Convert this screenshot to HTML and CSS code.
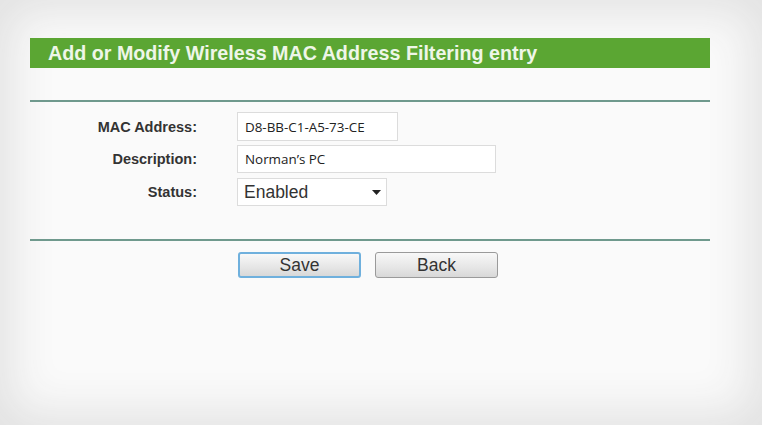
FILE: index.html
```html
<!DOCTYPE html>
<html>
<head>
<meta charset="utf-8">
<link rel="stylesheet" href="styles.css">
</head>
<body>
<div class="page">
  <div class="title">Add or Modify Wireless MAC Address Filtering entry</div>
  <div class="rule rule-top"></div>
  <div class="form">
    <div class="label">MAC Address:</div>
    <div class="field field-mac">D8-BB-C1-A5-73-CE</div>
    <div class="label">Description:</div>
    <div class="field field-desc">Norman’s PC</div>
    <div class="label">Status:</div>
    <div class="field field-select"><span>Enabled</span><svg class="caret" width="9" height="5" viewBox="0 0 9 5"><path d="M0 0 L9 0 L4.5 5 Z" fill="#222"/></svg></div>
  </div>
  <div class="rule rule-bottom"></div>
  <div class="buttons">
    <div class="btn btn-save">Save</div>
    <div class="btn">Back</div>
  </div>
</div>
</body>
</html>
```
FILE: styles.css
```css
html, body {
  margin: 0;
  padding: 0;
  width: 762px;
  height: 425px;
  overflow: hidden;
}
body {
  background: #fafafa;
  box-shadow: inset 0 0 45px 12px #e2e2e2;
  font-family: "Liberation Sans", Arial, sans-serif;
}
.page {
  padding: 38px 0 0 30px;
  width: 680px;
}
.title {
  height: 30px;
  line-height: 30px;
  background: #5ba633;
  color: #eef6e8;
  font-weight: bold;
  font-size: 19.7px;
  padding-left: 18px;
}
.rule {
  height: 2px;
  background: #6f998d;
}
.rule-top {
  margin-top: 32px;
}
.form {
  margin-top: 10px;
  display: grid;
  grid-template-columns: 167px 1fr;
  column-gap: 40px;
  row-gap: 4px;
  align-items: center;
}
.label {
  text-align: right;
  font-weight: bold;
  font-size: 14.5px;
  color: #333;
}
.field {
  box-sizing: border-box;
  background: #fff;
  border: 1px solid #dcdcdc;
  height: 29px;
  display: flex;
  align-items: center;
  padding-left: 7px;
  font-family: "Open Sans", "Noto Sans", sans-serif;
  font-size: 13.4px;
  color: #222;
}
.field-mac { width: 161px; }
.field-desc { width: 259px; height: 28px; }
.field-select {
  width: 150px;
  height: 28px;
  margin-top: 1px;
  font-family: "Liberation Sans", Arial, sans-serif;
  font-size: 17.5px;
  color: #333;
  justify-content: space-between;
  padding-right: 5px;
  padding-left: 6px;
}
.caret { display: block; }
.rule-bottom {
  margin-top: 33px;
}
.buttons {
  margin-top: 11px;
  margin-left: 208px;
  display: flex;
  gap: 14px;
}
.btn {
  box-sizing: border-box;
  width: 123px;
  height: 26px;
  border: 1px solid #9a9a9a;
  border-radius: 3px;
  background: linear-gradient(#f8f8f8, #e6e6e6 60%, #d8d8d8);
  font-size: 17.5px;
  color: #333;
  display: flex;
  align-items: center;
  justify-content: center;
}
.btn-save {
  border: 2px solid #6fb0dd;
}
```
